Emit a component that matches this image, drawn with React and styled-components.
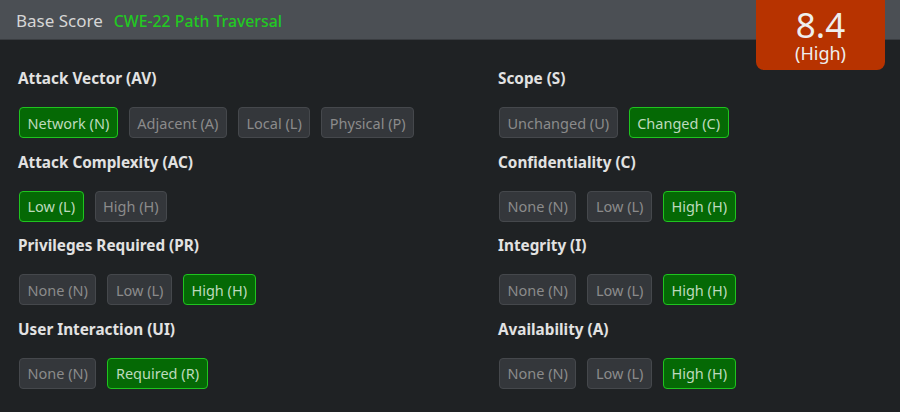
import React from 'react';
import styled, { createGlobalStyle } from 'styled-components';

const Global = createGlobalStyle`
  html, body {
    margin: 0;
    background: #1f2224;
  }
  body {
    font-family: 'Noto Sans', 'Open Sans', sans-serif;
  }
`;

const Page = styled.div`
  position: relative;
  width: 900px;
  min-height: 412px;
  background: #1f2224;
`;

const Header = styled.div`
  display: flex;
  align-items: center;
  gap: 11px;
  height: 40px;
  padding: 2px 16px 0;
  background: #4b4f54;
  border-bottom: 1px solid #3a3d41;
  box-sizing: border-box;
`;

const Title = styled.span`
  color: #d6d6d6;
  font-size: 17px;
`;

const Cwe = styled.span`
  color: #22c922;
  font-size: 15.8px;
  font-weight: 500;
`;

const ScoreBox = styled.div`
  position: absolute;
  top: 0;
  right: 15px;
  width: 129px;
  height: 70px;
  border-radius: 0 0 8px 8px;
  background: #b73300;
  color: #eeeeee;
  display: flex;
  flex-direction: column;
  align-items: center;
  justify-content: center;
`;

const ScoreValue = styled.div`
  font-size: 35px;
  line-height: 36px;
`;

const ScoreLabel = styled.div`
  font-size: 18px;
  line-height: 20px;
`;

const Grid = styled.div`
  display: grid;
  grid-template-columns: 480px 1fr;
  padding: 0 0 0 18px;
`;

const Column = styled.div`
  display: flex;
  flex-direction: column;
`;

const Metric = styled.div`
  display: flex;
  flex-direction: column;
  height: 83.5px;
`;

const MetricName = styled.div`
  color: #e2e2e2;
  font-size: 15.3px;
  font-weight: 700;
  padding-top: 28px;
  line-height: 20px;
`;

const Options = styled.div`
  display: flex;
  gap: 11px;
  margin-top: 19px;
  padding-left: 1px;
`;

const Option = styled.button`
  height: 31px;
  padding: 0 7.5px;
  border-radius: 4px;
  font-family: inherit;
  font-size: 14.5px;
  border: 1px solid ${p => (p.$active ? '#1fc41f' : '#45484c')};
  background: ${p => (p.$active ? '#056905' : '#34373b')};
  color: ${p => (p.$active ? '#bddabd' : '#8b8b8b')};
  cursor: pointer;
`;

const left = [
  { name: 'Attack Vector (AV)', options: ['Network (N)', 'Adjacent (A)', 'Local (L)', 'Physical (P)'], value: 0 },
  { name: 'Attack Complexity (AC)', options: ['Low (L)', 'High (H)'], value: 0 },
  { name: 'Privileges Required (PR)', options: ['None (N)', 'Low (L)', 'High (H)'], value: 2 },
  { name: 'User Interaction (UI)', options: ['None (N)', 'Required (R)'], value: 1 },
];

const right = [
  { name: 'Scope (S)', options: ['Unchanged (U)', 'Changed (C)'], value: 1 },
  { name: 'Confidentiality (C)', options: ['None (N)', 'Low (L)', 'High (H)'], value: 2 },
  { name: 'Integrity (I)', options: ['None (N)', 'Low (L)', 'High (H)'], value: 2 },
  { name: 'Availability (A)', options: ['None (N)', 'Low (L)', 'High (H)'], value: 2 },
];

const MetricBlock = ({ metric }) => (
  <Metric>
    <MetricName>{metric.name}</MetricName>
    <Options>
      {metric.options.map((opt, i) => (
        <Option key={opt} $active={i === metric.value}>
          {opt}
        </Option>
      ))}
    </Options>
  </Metric>
);

const App = () => (
  <Page>
    <Global />
    <Header>
      <Title>Base Score</Title>
      <Cwe>CWE-22 Path Traversal</Cwe>
    </Header>
    <ScoreBox>
      <ScoreValue>8.4</ScoreValue>
      <ScoreLabel>(High)</ScoreLabel>
    </ScoreBox>
    <Grid>
      <Column>
        {left.map(m => (
          <MetricBlock key={m.name} metric={m} />
        ))}
      </Column>
      <Column>
        {right.map(m => (
          <MetricBlock key={m.name} metric={m} />
        ))}
      </Column>
    </Grid>
  </Page>
);

export default App;
